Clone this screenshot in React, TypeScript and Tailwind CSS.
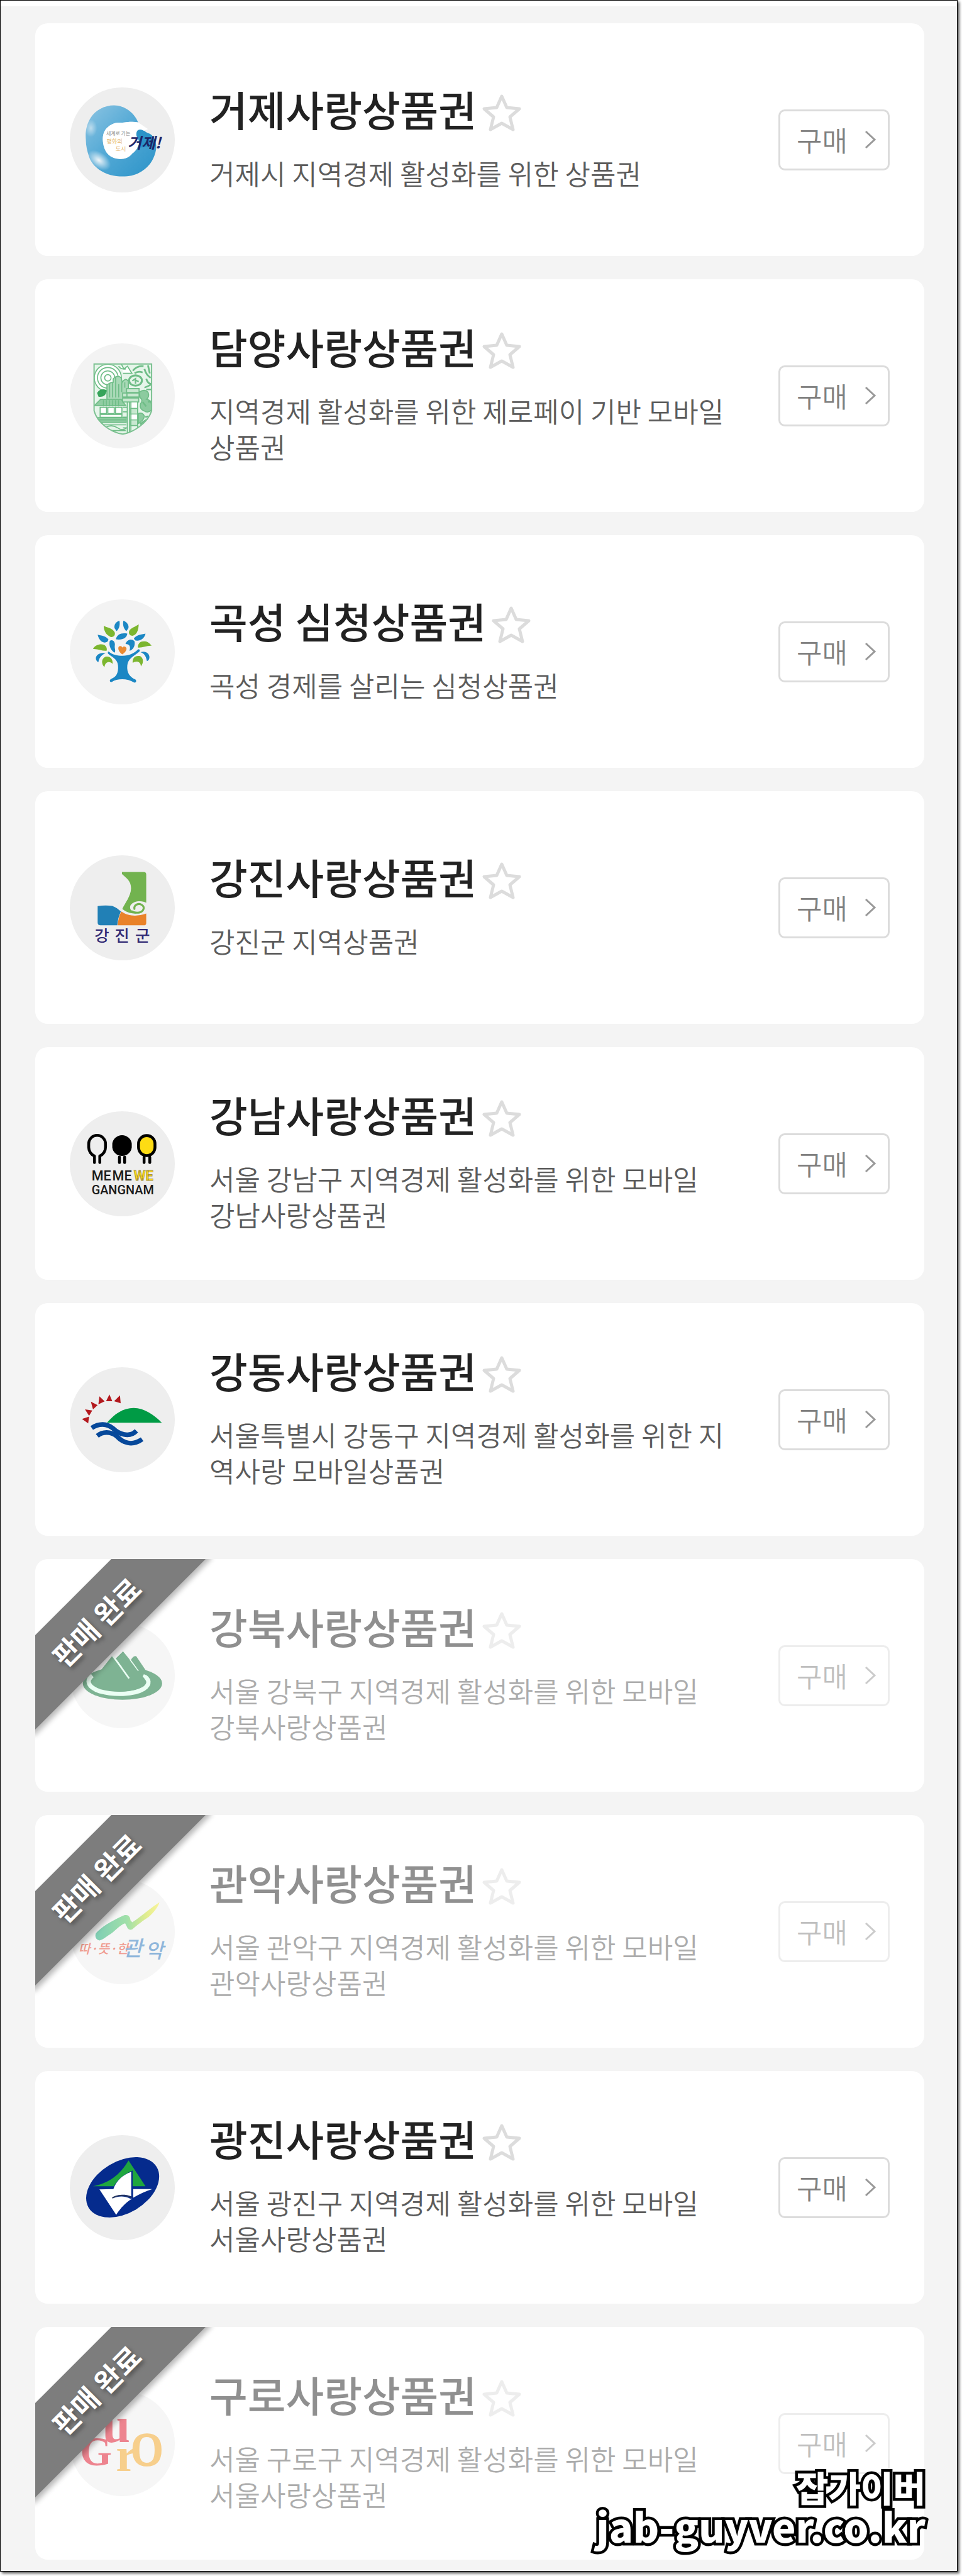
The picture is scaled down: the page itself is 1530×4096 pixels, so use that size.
import { useState } from 'react';
import type { ReactNode } from 'react';

interface Voucher {
  id: string;
  name: string;
  description: string;
  logo: ReactNode;
  // circle behind the logo
  tone: string;
  soldOut?: boolean;
}

const LOGO_FONT = '"Noto Sans CJK KR", sans-serif';

function GeojeLogo() {
  return (
    <svg className="w-full h-full" viewBox="62 72 588 588" aria-hidden="true">
      <defs>
        <linearGradient id="geoje-wave" x1="0" y1="0" x2="1" y2="1">
          <stop offset="0" stopColor="#8cc4e2" />
          <stop offset="0.45" stopColor="#55aad6" />
          <stop offset="1" stopColor="#2b93c8" />
        </linearGradient>
        <radialGradient id="geoje-foam">
          <stop offset="0" stopColor="#eef4f8" />
          <stop offset="1" stopColor="#eef4f8" stopOpacity="0" />
        </radialGradient>
      </defs>
      <path
        fill="url(#geoje-wave)"
        d="M445 268C425 215 370 172 310 172C255 172 205 200 180 240C155 280 148 320 152 365C152 400 160 430 170 460C185 510 240 550 290 562C340 575 410 574 450 550C500 525 535 480 545 420C550 380 535 345 505 330C485 325 480 308 455 308C440 310 435 325 436 345L452 365C455 395 435 425 412 442C395 465 365 476 335 472C290 468 262 440 252 400C244 365 244 335 262 308C285 280 315 265 350 270C385 266 415 262 445 268Z"
      />
      <path fill="#fff" d="M350 270C385 266 415 262 445 268L500 305L436 330L452 365C455 395 435 425 412 442C395 465 365 476 335 472C290 468 262 440 252 400C244 365 244 335 262 308C285 280 315 265 350 270Z" />
      <path fill="#2b93c8" d="M436 345C432 322 440 308 456 308C474 308 484 324 505 330C530 340 545 370 545 400L440 410C456 390 452 370 436 345Z" />
      <ellipse cx="225" cy="480" rx="75" ry="45" fill="url(#geoje-foam)" transform="rotate(35 225 480)" />
      <ellipse cx="180" cy="300" rx="35" ry="50" fill="url(#geoje-foam)" opacity="0.6" />
      <g fontFamily={LOGO_FONT}>
        <text x="266" y="340" fontSize="28" fill="#8a8a8a">세계로 가는</text>
        <text x="268" y="384" fontSize="32" fill="#e5b56c">평화의</text>
        <text x="318" y="428" fontSize="32" fill="#e5b56c">도시</text>
        <text x="386" y="414" fontSize="84" fontWeight="700" fontStyle="italic" fill="#1c2668">거제!</text>
      </g>
    </svg>
  );
}

function DamyangLogo() {
  return (
    <svg className="w-full h-full" viewBox="62 72 588 588" aria-hidden="true">
      <defs>
        <clipPath id="damyang-shield">
          <path d="M198 187H520V450C500 515 420 570 359 580C290 570 215 515 198 450Z" />
        </clipPath>
      </defs>
      <g clipPath="url(#damyang-shield)" fill="none" stroke="#6fbd87" strokeWidth="6">
        <rect x="198" y="187" width="322" height="393" fill="#e6f5ea" stroke="none" />
        <g fill="#fff">
          <circle cx="275" cy="265" r="76" />
          <circle cx="275" cy="265" r="58" />
          <circle cx="275" cy="265" r="39" />
          <circle cx="275" cy="265" r="18" />
        </g>
        <path fill="#fff" d="M350 187L365 215L385 200L410 240L360 240M335 200Q350 220 375 215" />
        <path strokeWidth="10" d="M415 225Q440 195 475 200M425 240Q445 225 470 235M480 215Q490 250 515 265M500 195L510 240M490 270Q500 300 520 300" />
        <ellipse cx="430" cy="280" rx="36" ry="29" fill="#e6f5ea" strokeWidth="11" />
        <path d="M430 298V270L412 282M430 278L448 286" strokeWidth="8" />
        {/* bamboo forest */}
        <path fill="#a9d9b7" d="M270 375V305Q290 290 305 290V270Q330 245 350 265L355 290Q375 260 390 285V400H270Z" />
        <path d="M285 375V300M302 375V290M319 375V262M336 375V300M353 345V290M370 320V290" />
        <path fill="#36a45a" stroke="#36a45a" d="M218 350Q235 325 265 335Q262 372 225 368Z" />
        {/* pavilion */}
        <path fill="#90cda2" d="M200 420L235 385H350L375 420Z" />
        <path strokeWidth="5" d="M250 390V425M267 390V425M284 390V425M301 390V425M318 390V425M335 390V425" />
        <g fill="#fff">
          <rect x="232" y="430" width="36" height="35" />
          <rect x="275" y="430" width="36" height="35" />
          <rect x="318" y="430" width="36" height="35" />
          <rect x="232" y="470" width="122" height="16" />
        </g>
        <path fill="#90cda2" d="M200 488H378V514H200Z" />
        <path d="M210 500H375M250 528H378M265 540Q300 525 330 545T378 545M280 560H375" />
        {/* bamboo stalks */}
        <g fill="#c8e8d0">
          <rect x="380" y="325" width="70" height="22" />
          <rect x="380" y="350" width="70" height="22" />
          <rect x="358" y="350" width="24" height="22" />
          <rect x="358" y="378" width="90" height="22" />
          <rect x="404" y="436" width="38" height="32" />
          <rect x="404" y="500" width="38" height="32" />
        </g>
        <path d="M384 400V580M396 400V580M404 400V580M442 400V580M360 430H382M360 455H382M360 485H382M360 545H382" />
        <path fill="#fff" stroke="none" d="M408 402H438V432H408ZM408 470H438V498H408Z" />
        {/* trees on the right */}
        <path fill="#8ccb9f" d="M452 345Q480 325 500 345Q510 370 492 385Q520 390 520 420V445Q500 465 478 450Q450 440 458 410Q475 390 455 375Z" />
        <path fill="#8ccb9f" d="M446 465Q470 455 480 480Q475 505 446 520Z" />
        <path strokeWidth="9" d="M480 320L515 305M490 330L520 330M500 400L520 395M470 400L490 425M485 485L500 480M455 525L490 500" />
      </g>
      <path fill="none" stroke="#7cc191" strokeWidth="7" d="M198 187H520V450C500 515 420 570 359 580C290 570 215 515 198 450Z" />
    </svg>
  );
}

function GokseongLogo() {
  return (
    <svg className="w-full h-full" viewBox="62 66 588 588" aria-hidden="true">
      <g fill="#1b87c4">
        <path d="M340 186C318 192 308 212 313 228L324 244C340 230 344 208 340 186Z" />
        <path d="M362 186C382 192 395 212 390 228L379 244C362 230 358 208 362 186Z" />
        <path d="M218 264C238 268 268 272 279 292L272 304C250 316 226 298 218 264Z" />
        <path d="M486 258C464 262 432 266 421 286L428 296C452 302 480 288 486 258Z" />
        <path d="M320 290C326 262 350 252 384 258C382 282 356 296 320 290Z" />
        <path d="M286 298C304 288 318 306 314 326C312 340 320 352 314 364C296 356 278 328 286 298Z" />
        <path d="M374 316C384 288 410 286 424 300C430 324 418 348 396 354C402 338 402 316 374 316Z" />
        <path d="M262 368C236 360 208 374 208 396C208 406 214 414 222 418C226 398 234 380 262 368Z" />
        <path d="M458 362C484 352 508 366 508 390C508 402 502 410 494 412C490 390 482 370 458 362Z" />
        <path d="M280 358C300 376 330 382 358 382C392 382 424 368 444 346C456 344 456 354 450 360C420 384 388 398 384 436C380 478 398 502 430 515C438 524 432 534 422 532C386 508 330 508 298 528C286 532 282 518 292 512C322 502 336 478 332 436C328 398 300 392 276 370C274 362 276 358 280 358Z" />
      </g>
      <g fill="#7cb62f">
        <path d="M252 214C274 226 304 228 314 252C318 270 304 280 290 276C266 266 252 242 252 214Z" />
        <path d="M448 206C430 220 404 224 394 244C390 262 400 270 414 270C436 264 446 244 448 206Z" />
        <path d="M192 344C204 320 232 314 254 320C268 328 272 344 268 354C244 356 220 342 192 344Z" />
        <path d="M520 326C502 300 480 298 460 304C446 312 442 328 444 336C470 338 494 324 520 326Z" />
        <path d="M256 446C236 424 240 398 260 388C284 382 304 396 302 428C290 412 260 410 256 446Z" />
        <path d="M460 442C478 420 474 394 456 384C432 378 412 390 414 422C434 408 460 414 460 442Z" />
      </g>
      <path fill="#ea8a31" d="M356 374C342 364 332 350 334 336C338 324 352 326 356 336C362 326 380 330 380 344C376 358 368 366 356 374Z" />
    </svg>
  );
}

function GangjinLogo() {
  return (
    <svg className="w-full h-full" viewBox="62 60 588 588" aria-hidden="true">
      <path fill="#72b34f" d="M354 153H476Q490 153 490 167V326C470 312 420 312 402 340C392 362 412 380 440 386C400 388 376 376 356 360C372 325 404 290 405 245C405 205 382 190 354 165Z" />
      <path fill="#2180b6" d="M218 344Q260 338 300 343C320 350 334 362 348 374C336 400 330 425 328 452H234Q218 452 218 436Z" />
      <path fill="#e98229" d="M350 374C390 402 440 404 490 386V440Q490 452 476 452H330C332 425 338 400 350 374Z" />
      <path fill="none" stroke="#72b34f" strokeWidth="11" strokeLinecap="round" d="M424 360C420 336 448 326 466 338C484 350 476 374 452 380Q430 384 410 374" />
      <g fontFamily={LOGO_FONT} fontSize="90" fontWeight="500" fill="#332b75">
        <text x="200" y="544">강</text>
        <text x="313" y="544">진</text>
        <text x="428" y="544">군</text>
      </g>
    </svg>
  );
}

function GangnamLogo() {
  return (
    <svg className="w-full h-full" viewBox="62 54 588 588" aria-hidden="true">
      <g fill="none" stroke="#000" strokeWidth="16" strokeLinecap="round" strokeLinejoin="round">
        <path d="M200 341V304C180 296 168 276 168 256V236A47 47 0 0 1 262 236V256C262 276 250 296 230 304V341" />
        <path fill="#000" d="M308 236A47 47 0 0 1 401 236V256A47 47 0 0 1 308 256Z" />
        <path d="M340 310V341M369 310V341" />
        <path fill="#fddc14" d="M447 236A46 46 0 0 1 539 236V256A46 46 0 0 1 447 256Z" />
        <path d="M478 310V341M510 310V341" />
      </g>
      <g fontFamily="Roboto, sans-serif" fontWeight="500" fill="#1a1a1a">
        <text x="184" y="442" fontSize="76">ME</text>
        <text x="300" y="442" fontSize="76">ME</text>
        <text x="420" y="442" fontSize="76" fontWeight="700" fill="#fddc14" stroke="#a8923a" strokeWidth="3">WE</text>
        <text x="184" y="520" fontSize="70">GANGNAM</text>
      </g>
    </svg>
  );
}

function GangdongLogo() {
  return (
    <svg className="w-full h-full" viewBox="62 52 588 588" aria-hidden="true">
      <path
        fill="#b3191e"
        d="M130 342L170 328L165 366ZM147 288L188 294L170 324ZM180 245L218 264L192 288ZM228 215L257 243L222 260ZM284 204L300 242H265ZM343 210L347 254L310 242Z"
      />
      <path fill="#009b45" d="M270 363C310 315 360 280 420 280C480 280 535 320 578 363Z" />
      <g fill="none" stroke="#06489a" strokeWidth="26">
        <path d="M185 392C225 365 270 366 305 395C335 425 395 450 435 408" />
        <path d="M216 436C245 412 290 410 325 438C360 475 410 495 467 455" />
      </g>
    </svg>
  );
}

function GangbukLogo() {
  return (
    <svg className="w-full h-full" viewBox="242 407 588 588" aria-hidden="true">
      <ellipse cx="537" cy="744" rx="222" ry="92" fill="#00692a" />
      <path fill="none" stroke="#d8ffea" strokeWidth="24" d="M368 700C330 730 345 765 410 788C490 810 600 808 655 775C695 750 690 715 648 702" />
      <path fill="#00692a" d="M362 738L478 592L576 716L582 712L498 606L540 565L628 672L584 612Q600 585 614 592L668 672L650 705C690 740 650 785 530 790C430 785 380 770 362 738Z" />
      <path stroke="#d8ffea" strokeWidth="9" d="M484 590L574 716" />
      <path stroke="#d8ffea" strokeWidth="5" d="M578 610L626 674" />
    </svg>
  );
}

function GwanakLogo() {
  return (
    <svg className="w-full h-full" viewBox="242 401 588 588" aria-hidden="true">
      <defs>
        <linearGradient id="gwanak-brush" x1="0" y1="0" x2="1" y2="0">
          <stop offset="0" stopColor="#009e6c" />
          <stop offset="0.5" stopColor="#45c255" />
          <stop offset="0.8" stopColor="#c6dc20" />
          <stop offset="1" stopColor="#f2e93a" />
        </linearGradient>
      </defs>
      <path fill="url(#gwanak-brush)" d="M388 704C420 665 500 622 550 602C572 600 580 612 582 632L592 642C640 612 690 565 744 530C738 555 710 590 684 612C655 632 615 660 592 682C575 688 566 680 562 668L552 648C530 652 495 690 470 708C450 720 430 738 408 744C392 742 380 725 388 704Z" />
      <g fontFamily={LOGO_FONT} fontStyle="italic" fontWeight="500">
        <text x="290" y="818" fontSize="72" fill="#e23a1f">따·뜻·한</text>
        <text x="540" y="832" fontSize="118" fill="#1f6fb8">관</text>
        <text x="664" y="842" fontSize="112" fill="#1f6fb8">악</text>
      </g>
    </svg>
  );
}

function GwangjinLogo() {
  return (
    <svg className="w-full h-full" viewBox="62 64 588 588" aria-hidden="true">
      <ellipse cx="358" cy="356" rx="222" ry="145" fill="#052b8d" transform="rotate(-31 358 356)" />
      <path fill="#1fa63f" d="M391 206L486 350H192C280 335 345 285 391 206Z" />
      <path fill="#052b8d" d="M300 372C312 325 360 285 414 262V372Z" />
      <path fill="#fff" d="M306 366C322 320 360 285 406 270V406L396 404C365 392 320 398 300 420C330 402 375 404 400 420H412C375 440 345 475 322 510L228 368Z" />
      <path fill="#fff" d="M417 366H524C488 378 450 395 417 414Z" />
      <path fill="none" stroke="#27365e" strokeWidth="7" d="M300 416C325 398 375 398 410 412" />
    </svg>
  );
}

function GuroLogo() {
  return (
    <svg className="w-full h-full" viewBox="242 416 588 588" aria-hidden="true">
      <g fontFamily='"Liberation Serif", serif' fontWeight="700">
        <text x="300" y="830" fontSize="228" fill="#dc0c22">G</text>
        <text x="424" y="702" fontSize="280" fill="#dc0c22">u</text>
        <text x="500" y="862" fontSize="270" fill="#f0a01c">r</text>
        <text x="582" y="832" fontSize="370" fontWeight="400" fill="#f0a01c" stroke="#f0a01c" strokeWidth="6">o</text>
      </g>
    </svg>
  );
}

const VOUCHERS: Voucher[] = [
  { id: 'geoje', name: '거제사랑상품권', description: '거제시 지역경제 활성화를 위한 상품권', logo: <GeojeLogo />, tone: 'bg-[#eeeeee]' },
  { id: 'damyang', name: '담양사랑상품권', description: '지역경제 활성화를 위한 제로페이 기반 모바일 상품권', logo: <DamyangLogo />, tone: 'bg-[#f3f3f3]' },
  { id: 'gokseong', name: '곡성 심청상품권', description: '곡성 경제를 살리는 심청상품권', logo: <GokseongLogo />, tone: 'bg-[#f3f3f3]' },
  { id: 'gangjin', name: '강진사랑상품권', description: '강진군 지역상품권', logo: <GangjinLogo />, tone: 'bg-[#eeeeee]' },
  { id: 'gangnam', name: '강남사랑상품권', description: '서울 강남구 지역경제 활성화를 위한 모바일 강남사랑상품권', logo: <GangnamLogo />, tone: 'bg-[#eeeeee]' },
  { id: 'gangdong', name: '강동사랑상품권', description: '서울특별시 강동구 지역경제 활성화를 위한 지역사랑 모바일상품권', logo: <GangdongLogo />, tone: 'bg-[#eeeeee]' },
  { id: 'gangbuk', name: '강북사랑상품권', description: '서울 강북구 지역경제 활성화를 위한 모바일 강북사랑상품권', logo: <GangbukLogo />, tone: 'bg-[#eeeeee]', soldOut: true },
  { id: 'gwanak', name: '관악사랑상품권', description: '서울 관악구 지역경제 활성화를 위한 모바일 관악사랑상품권', logo: <GwanakLogo />, tone: 'bg-[#eeeeee]', soldOut: true },
  { id: 'gwangjin', name: '광진사랑상품권', description: '서울 광진구 지역경제 활성화를 위한 모바일 서울사랑상품권', logo: <GwangjinLogo />, tone: 'bg-[#eeeeee]' },
  { id: 'guro', name: '구로사랑상품권', description: '서울 구로구 지역경제 활성화를 위한 모바일 서울사랑상품권', logo: <GuroLogo />, tone: 'bg-[#eeeeee]', soldOut: true },
];

function VoucherCard({ voucher }: { voucher: Voucher }) {
  const [favorite, setFavorite] = useState(false);

  return (
    <li className="relative flex min-h-[370px] overflow-hidden rounded-[20px] bg-white">
      <div className={`flex flex-1 items-center px-[55px] ${voucher.soldOut ? 'opacity-50' : ''}`}>
        <div className={`size-[167px] shrink-0 overflow-hidden rounded-full ${voucher.tone}`}>
          {voucher.logo}
        </div>

        <div className="ml-[55px] mr-20 min-w-0 flex-1 pb-3">
          <div className="flex items-center gap-2">
            <h2 className="text-[66px] leading-[86px] font-medium text-[#222222]">{voucher.name}</h2>
            <button
              type="button"
              aria-label={`${voucher.name} 즐겨찾기`}
              aria-pressed={favorite}
              onClick={() => setFavorite(!favorite)}
              className="mt-4 size-16 shrink-0"
            >
              <svg viewBox="0 0 64 64" fill={favorite ? '#ffd23f' : 'none'} stroke="#dcdcdc" strokeWidth={5} strokeLinejoin="round">
                <path d="M32 5L40 23L60 25L45 38L50 58L32 48L14 58L19 38L4 25L24 23Z" />
              </svg>
            </button>
          </div>
          <p className="mt-8 text-[44px] leading-[57px] font-[350] text-[#5c5c5c]">
            {voucher.description}
          </p>
        </div>

        <button
          type="button"
          disabled={voucher.soldOut}
          className="flex h-[97px] w-[177px] shrink-0 items-center justify-between rounded-[10px] border-3 border-[#dcdcdc] pl-[26px] pr-[18px] text-[44px] font-[350] text-[#808080]"
        >
          구매
          <svg className="h-8 w-5" viewBox="0 0 20 32" fill="none" stroke="#999999" strokeWidth={3}>
            <path d="M3 3L17 16L3 29" />
          </svg>
        </button>
      </div>

      {voucher.soldOut && (
        <div className="absolute -left-[102px] top-[45px] flex h-[106px] w-[400px] -rotate-45 items-center justify-center bg-[#7d7d7d] pr-1 text-[45px] font-bold text-white shadow-[0_6px_8px_rgba(0,0,0,0.28)] [text-shadow:0_5px_6px_rgba(0,0,0,0.35)]">
          판매 완료
        </div>
      )}
    </li>
  );
}

export default function App() {
  return (
    <div className="min-h-screen bg-white pb-[7px] pr-[7px] font-['Noto_Sans_CJK_KR',sans-serif]">
      <main className="relative border border-black bg-[#f4f4f4] shadow-[3px_3px_4px_rgba(0,0,0,0.6)]">
        <div className="h-[9px] bg-white" />
        <ul className="flex flex-col gap-[37px] pb-[18px] pl-[55px] pr-[52px] pt-[27px]">
          {VOUCHERS.map((voucher) => (
            <VoucherCard key={voucher.id} voucher={voucher} />
          ))}
        </ul>

        {/* Blog signature */}
        <div className="absolute bottom-[42px] right-[50px] text-right font-black text-white [-webkit-text-stroke:9px_black] [paint-order:stroke_fill]">
          <p className="text-[56px] leading-[64px]">잡가이버</p>
          <p className="text-[63px] leading-[60px]">jab-guyver.co.kr</p>
        </div>
      </main>
    </div>
  );
}
